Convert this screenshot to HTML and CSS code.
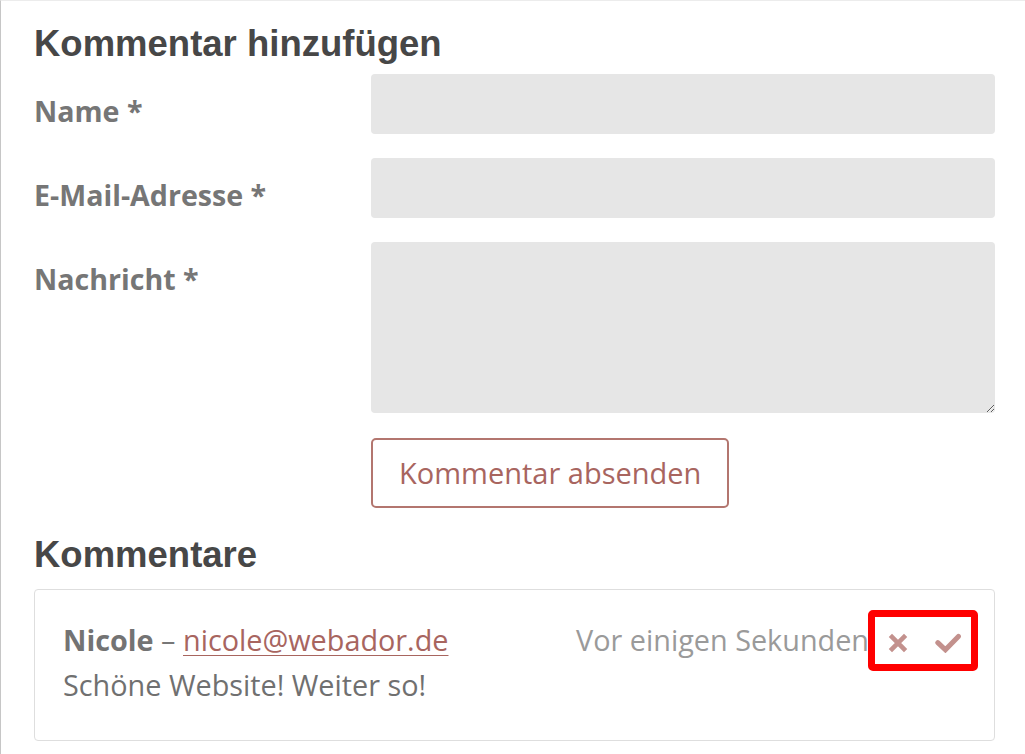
FILE: index.html
```html
<!DOCTYPE html>
<html lang="de">
<head>
	<meta charset="UTF-8">
	<title>Kommentare</title>
	<link rel="stylesheet" href="styles.css">
</head>
<body>
	<div class="page">
		<h2 class="section-title">Kommentar hinzufügen</h2>

		<form class="comment-form" onsubmit="return false;">
			<label class="form-label" for="name">Name *</label>
			<input class="form-input" id="name" type="text">

			<label class="form-label" for="email">E-Mail-Adresse *</label>
			<input class="form-input" id="email" type="email">

			<label class="form-label" for="message">Nachricht *</label>
			<textarea class="form-input form-textarea" id="message"></textarea>

			<button class="form-submit" type="submit">Kommentar absenden</button>
		</form>

		<h2 class="section-title section-title-list">Kommentare</h2>

		<div class="comment">
			<div class="comment-head">
				<div class="comment-author"><strong>Nicole</strong> – <a href="javascript:;">nicole@webador.de</a></div>
				<div class="comment-meta"><span class="comment-time">Vor einigen Sekunden</span><span class="comment-actions"><svg class="icon icon-delete" width="20" height="20" viewBox="0 0 20 20"><path d="M2.4 2.4L17.6 17.6M17.6 2.4L2.4 17.6"/></svg><svg class="icon icon-approve" width="26" height="20" viewBox="0 0 26 20"><path d="M2.8 9.6L10.4 16.8L23.4 3.4"/></svg><span class="highlight"></span></span></div>
			</div>
			<p class="comment-text">Schöne Website! Weiter so!</p>
		</div>
	</div>
</body>
</html>
```

FILE: styles.css
```css
body {
	margin: 0;
	background: #fff;
	font-family: "Open Sans", sans-serif;
	color: #707070;
}
.page {
	box-sizing: border-box;
	min-height: 100vh;
	padding: 0 30px 0 33px;
	border-top: 1px solid #ececec;
	border-left: 1px solid #c6c6c6;
}
.section-title {
	margin: 21px 0 8px;
	font-family: "Liberation Sans", Arial, sans-serif;
	font-size: 36.5px;
	line-height: 44px;
	font-weight: bold;
	color: #474747;
}
.section-title-list {
	margin: 25px 0 12px;
}

/* formular */
.comment-form {
	display: grid;
	grid-template-columns: 337px 624px;
	row-gap: 24px;
}
.form-label {
	padding-top: 16px;
	font-size: 28.6px;
	line-height: 42px;
	font-weight: 700;
	color: #767676;
}
.form-input {
	display: block;
	box-sizing: border-box;
	width: 100%;
	height: 60px;
	margin: 0;
	padding: 0 16px;
	border: 0;
	border-radius: 4px;
	background: #e6e6e6;
	font: inherit;
	font-size: 29px;
	color: #555;
	outline: none;
}
.form-textarea {
	height: 171px;
	padding: 12px 16px;
	resize: vertical;
}
.form-submit {
	grid-column: 2;
	justify-self: start;
	margin-top: 1px;
	padding: 12px 26px;
	border: 2px solid #b3766f;
	border-radius: 5px;
	background: #fff;
	font-family: "Open Sans", sans-serif;
	font-size: 29px;
	line-height: 42px;
	color: #a8655f;
	cursor: pointer;
}

/* kommentare */
.comment {
	padding: 28px 30px 32px 28px;
	border: 1px solid #dedede;
	border-radius: 4px;
	font-size: 28.8px;
	line-height: 44.8px;
}
.comment-head {
	display: flex;
	justify-content: space-between;
}
.comment-author strong {
	font-weight: 700;
	color: #737373;
}
.comment-author {
	color: #777;
}
.comment-author a {
	color: #a8655f;
	text-decoration: underline;
	text-decoration-thickness: 1px;
	text-underline-offset: 4px;
}
.comment-time {
	color: #9a9a9a;
}
.comment-actions {
	position: relative;
	display: inline-block;
	margin-left: 19px;
	padding-right: 3px;
}
.icon {
	vertical-align: middle;
	fill: none;
	stroke: #c3918d;
}
.icon-delete {
	stroke-width: 4.6;
}
.icon-approve {
	margin-left: 27px;
	stroke-width: 5;
	stroke-linecap: round;
}
.highlight {
	position: absolute;
	top: -8px;
	bottom: -8px;
	left: -20px;
	right: -14px;
	border: 7px solid #ff0000;
	border-radius: 5px;
	pointer-events: none;
}
.comment-text {
	margin: 0;
}
```
